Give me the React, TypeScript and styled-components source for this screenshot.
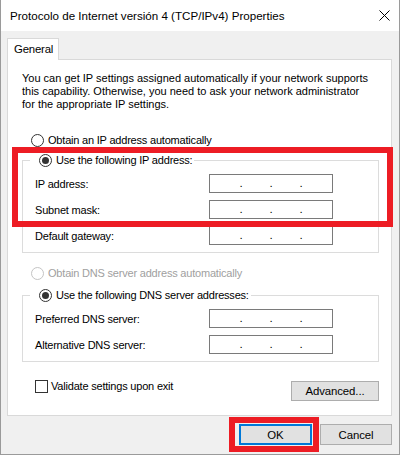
import React from 'react';
import styled, { createGlobalStyle } from 'styled-components';

const GlobalStyle = createGlobalStyle`
  html, body {
    margin: 0;
    padding: 0;
    background: #f0f0f0;
  }
  body {
    font-family: "Liberation Sans", Arial, sans-serif;
    font-size: 11px;
    letter-spacing: -0.2px;
    color: #000;
  }
  * {
    box-sizing: border-box;
  }
`;

const Window = styled.div`
  position: relative;
  width: 400px;
  height: 455px;
  background: #f0f0f0;
  border: 1px solid #9a9a9a;
  border-top: none;
  display: flex;
  flex-direction: column;
`;

const TitleBar = styled.div`
  height: 31px;
  flex: none;
  background: #fff;
  display: flex;
  align-items: center;
  justify-content: space-between;
  padding: 0 9px 0 9px;
`;

const Title = styled.div`
  font-size: 11.6px;
  letter-spacing: 0;
  color: #000;
  padding-bottom: 1px;
`;

const Body = styled.div`
  flex: 1;
  display: flex;
  flex-direction: column;
  padding: 7px 7px 0 6px;
`;

const Tab = styled.div`
  position: relative;
  z-index: 1;
  width: 52px;
  height: 22px;
  margin-bottom: -1px;
  background: #fff;
  border: 1px solid #d9d9d9;
  border-bottom: none;
  padding: 4px 0 0 6px;
  font-size: 11.4px;
`;

const Panel = styled.div`
  height: 357px;
  flex: none;
  background: #fff;
  border: 1px solid #d9d9d9;
  padding: 12px 12px 0 14px;
  display: flex;
  flex-direction: column;
`;

const Description = styled.p`
  margin: 0;
  line-height: 13px;
  letter-spacing: 0;
  white-space: nowrap;
`;

const RadioRow = styled.label<{ $disabled?: boolean; $top?: number }>`
  display: flex;
  align-items: center;
  gap: 4px;
  height: 14px;
  margin-left: 9px;
  margin-top: ${p => p.$top ?? 0}px;
  color: ${p => (p.$disabled ? '#a0a0a0' : '#000')};
  white-space: nowrap;
`;

const RadioCircle = styled.span<{ $checked?: boolean; $disabled?: boolean }>`
  width: 13px;
  height: 13px;
  flex: none;
  border-radius: 50%;
  border: 1px solid ${p => (p.$disabled ? '#c4c4c4' : '#333')};
  background: #fff;
  display: inline-flex;
  align-items: center;
  justify-content: center;

  &::after {
    content: '';
    width: 7px;
    height: 7px;
    border-radius: 50%;
    background: #333;
    display: ${p => (p.$checked ? 'block' : 'none')};
  }
`;

const Group = styled.fieldset<{ $top: number }>`
  margin: ${p => p.$top}px 0 0 0;
  padding: 0 8px 7px 8px;
  border: 1px solid #dcdcdc;
  min-width: 0;
`;

const Legend = styled.legend`
  padding: 0 2px 0 0;
  margin-left: -1px;
  line-height: 14px;
`;

const FieldGrid = styled.div<{ $top: number }>`
  display: grid;
  grid-template-columns: 178px 124px;
  grid-auto-rows: 19px;
  row-gap: 7px;
  margin-top: ${p => p.$top}px;
`;

const FieldLabel = styled.div`
  display: flex;
  align-items: center;
  padding-left: 4px;
  white-space: nowrap;
`;

const IpBox = styled.div`
  display: flex;
  align-items: flex-start;
  border: 1px solid #7a7a7a;
  background: #fff;
  padding-left: 2px;
  line-height: 14px;
  font-size: 11.6px;
  color: #000;
`;

const IpSegment = styled.span`
  width: 28px;
  flex: none;
`;

const IpDot = styled.span`
  width: 2px;
  flex: none;
  display: flex;
  justify-content: center;
  padding-top: 1px;
`;

const BottomRow = styled.div`
  display: flex;
  justify-content: space-between;
  align-items: flex-start;
  margin-top: 17px;
`;

const CheckRow = styled.label`
  display: flex;
  align-items: center;
  gap: 3px;
  height: 14px;
  margin-left: 13px;
  white-space: nowrap;
`;

const CheckBox = styled.span`
  width: 13px;
  height: 13px;
  border: 1px solid #333;
  background: #fff;
  flex: none;
`;

const Button = styled.button<{ $width: number; $height?: number; $default?: boolean; $top?: number }>`
  width: ${p => p.$width}px;
  height: ${p => p.$height ?? 21}px;
  margin-top: ${p => p.$top ?? 0}px;
  background: #e1e1e1;
  border: ${p => (p.$default ? '2px solid #0078d7' : '1px solid #adadad')};
  font-family: "Liberation Sans", Arial, sans-serif;
  font-size: 11.4px;
  letter-spacing: -0.1px;
  color: #000;
  padding: 0;
`;

const Footer = styled.div`
  display: flex;
  justify-content: flex-end;
  gap: 8px;
  padding-top: 8px;
`;

const Highlight = styled.div<{ $x: number; $y: number; $w: number; $h: number }>`
  position: absolute;
  left: ${p => p.$x}px;
  top: ${p => p.$y}px;
  width: ${p => p.$w}px;
  height: ${p => p.$h}px;
  border: 6px solid #ed1c24;
  pointer-events: none;
`;

const IpInput = () => (
  <IpBox>
    <IpSegment />
    <IpDot>.</IpDot>
    <IpSegment />
    <IpDot>.</IpDot>
    <IpSegment />
    <IpDot>.</IpDot>
    <IpSegment />
  </IpBox>
);

const CloseIcon = () => (
  <svg width="11" height="11" viewBox="0 0 11 11">
    <path d="M0.5 0.5 L10.5 10.5 M10.5 0.5 L0.5 10.5" stroke="#000" strokeWidth="1" fill="none" />
  </svg>
);

const App: React.FC = () => (
  <>
    <GlobalStyle />
    <Window>
      <TitleBar>
        <Title>Protocolo de Internet versión 4 (TCP/IPv4) Properties</Title>
        <CloseIcon />
      </TitleBar>
      <Body>
        <Tab>General</Tab>
        <Panel>
          <Description>
            You can get IP settings assigned automatically if your network supports
            <br />
            this capability. Otherwise, you need to ask your network administrator
            <br />
            for the appropriate IP settings.
          </Description>

          <RadioRow $top={22}>
            <RadioCircle />
            Obtain an IP address automatically
          </RadioRow>

          <Group $top={6}>
            <Legend>
              <RadioRow>
                <RadioCircle $checked />
                Use the following IP address:
              </RadioRow>
            </Legend>
            <FieldGrid $top={7}>
              <FieldLabel>IP address:</FieldLabel>
              <IpInput />
              <FieldLabel>Subnet mask:</FieldLabel>
              <IpInput />
              <FieldLabel>Default gateway:</FieldLabel>
              <IpInput />
            </FieldGrid>
          </Group>

          <RadioRow $top={13} $disabled>
            <RadioCircle $disabled />
            Obtain DNS server address automatically
          </RadioRow>

          <Group $top={8}>
            <Legend>
              <RadioRow>
                <RadioCircle $checked />
                Use the following DNS server addresses:
              </RadioRow>
            </Legend>
            <FieldGrid $top={7}>
              <FieldLabel>Preferred DNS server:</FieldLabel>
              <IpInput />
              <FieldLabel>Alternative DNS server:</FieldLabel>
              <IpInput />
            </FieldGrid>
          </Group>

          <BottomRow>
            <CheckRow>
              <CheckBox />
              Validate settings upon exit
            </CheckRow>
            <Button $width={88} $height={20} $top={2}>Advanced...</Button>
          </BottomRow>
        </Panel>
        <Footer>
          <Button $width={73} $default>OK</Button>
          <Button $width={72}>Cancel</Button>
        </Footer>
      </Body>
      <Highlight $x={11} $y={147} $w={381} $h={80} />
      <Highlight $x={228} $y={417} $w={90} $h={35} />
    </Window>
  </>
);

export default App;
